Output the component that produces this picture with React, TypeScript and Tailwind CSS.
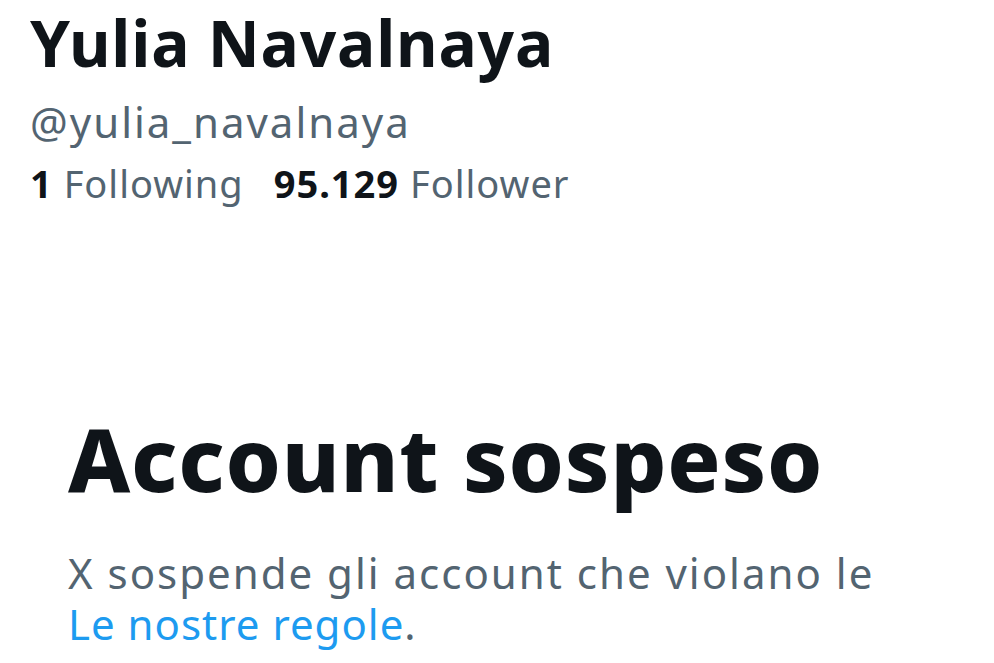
export default function App() {
  return (
    <div
      className="w-[994px] h-[663px] bg-white overflow-hidden text-[#0f1419]"
      style={{ fontFamily: '"Noto Sans", "Liberation Sans", sans-serif' }}
    >
      {/* Profile header */}
      <div className="pl-[30px]">
        <h1 className="text-[64px] font-bold leading-[86px] tracking-[0.8px]">Yulia Navalnaya</h1>
        <div className="text-[42px] leading-[56px] tracking-[2px] text-[#536471] mt-[8px]">@yulia_navalnaya</div>
        <div className="flex gap-[30px] text-[38px] leading-[52px] tracking-[1px] mt-[7px]">
          <span>
            <span className="font-bold">1</span>{" "}
            <span className="text-[#536471]">Following</span>
          </span>
          <span>
            <span className="font-bold">95.129</span>{" "}
            <span className="text-[#536471]">Follower</span>
          </span>
        </div>
      </div>

      {/* Suspended notice */}
      <div className="pl-[68px] pt-[199px]">
        <h2 className="text-[88px] font-extrabold leading-[100px] tracking-[0.8px]">Account sospeso</h2>
        <p className="text-[42px] leading-[51px] text-[#536471] mt-[39px]">
          <span className="tracking-[2px]">X sospende gli account che violano le</span>
          <br />
          <span className="tracking-[1px]">
            <span className="text-[#1d9bf0]">Le nostre regole</span>.
          </span>
        </p>
      </div>
    </div>
  );
}
